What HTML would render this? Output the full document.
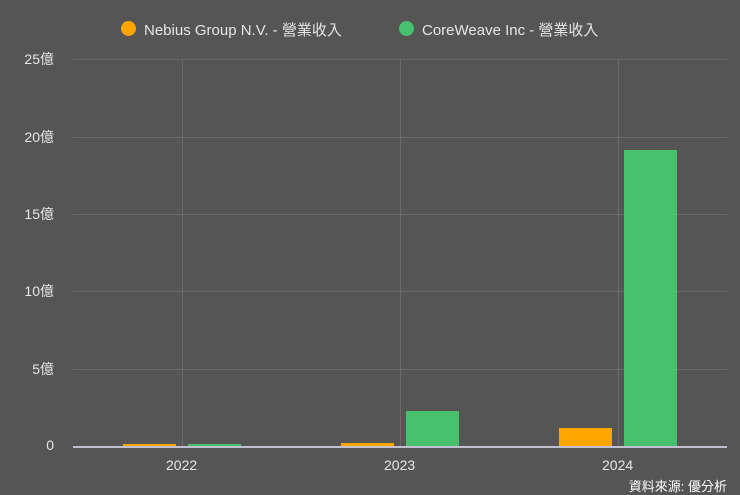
<!DOCTYPE html>
<html><head><meta charset="utf-8"><style>
html,body{margin:0;padding:0;}
body{width:740px;height:493px;background:#555555;position:relative;overflow:hidden;font-family:"Liberation Sans","Noto Sans CJK TC",sans-serif;color:#e6e6e6;}
.t{position:absolute;white-space:nowrap;}
.g{position:absolute;background:#6a6a6a;}
.b{position:absolute;}
</style></head><body>
<div class="b" style="left:121px;top:21px;width:15px;height:15px;border-radius:50%;background:#ffa500"></div>
<div class="t" style="left:144px;top:19px;font-size:15px">Nebius Group N.V. - 營業收入</div>
<div class="b" style="left:399px;top:21px;width:15px;height:15px;border-radius:50%;background:#48c16f"></div>
<div class="t" style="left:422px;top:19px;font-size:15px">CoreWeave Inc - 營業收入</div>

<div class="g" style="left:73px;top:59px;width:654px;height:1px"></div>
<div class="g" style="left:73px;top:137px;width:654px;height:1px"></div>
<div class="g" style="left:73px;top:214px;width:654px;height:1px"></div>
<div class="g" style="left:73px;top:291px;width:654px;height:1px"></div>
<div class="g" style="left:73px;top:369px;width:654px;height:1px"></div>
<div class="g" style="left:182px;top:59px;width:1px;height:388px"></div>
<div class="g" style="left:400px;top:59px;width:1px;height:388px"></div>
<div class="g" style="left:618px;top:59px;width:1px;height:388px"></div>

<div class="t" style="right:686px;top:49px;font-size:14px">25億</div>
<div class="t" style="right:686px;top:127px;font-size:14px">20億</div>
<div class="t" style="right:686px;top:204px;font-size:14px">15億</div>
<div class="t" style="right:686px;top:281px;font-size:14px">10億</div>
<div class="t" style="right:686px;top:359px;font-size:14px">5億</div>
<div class="t" style="right:686px;top:437px;font-size:14px">0</div>

<div class="b" style="left:123px;top:444px;width:53px;height:3px;background:#ffa500"></div>
<div class="b" style="left:188px;top:444px;width:53px;height:3px;background:#48c16f"></div>
<div class="b" style="left:341px;top:443px;width:53px;height:4px;background:#ffa500"></div>
<div class="b" style="left:406px;top:411px;width:53px;height:36px;background:#48c16f"></div>
<div class="b" style="left:559px;top:428px;width:53px;height:19px;background:#ffa500"></div>
<div class="b" style="left:624px;top:150px;width:53px;height:297px;background:#48c16f"></div>

<div class="b" style="left:73px;top:446px;width:654px;height:2px;background:#c0c0d0"></div>

<div class="t" style="left:166px;top:457px;font-size:14px">2022</div>
<div class="t" style="left:384px;top:457px;font-size:14px">2023</div>
<div class="t" style="left:602px;top:457px;font-size:14px">2024</div>
<div class="t" style="right:13px;top:476px;font-size:13px;color:#fff">資料來源: 優分析</div>
</body></html>
